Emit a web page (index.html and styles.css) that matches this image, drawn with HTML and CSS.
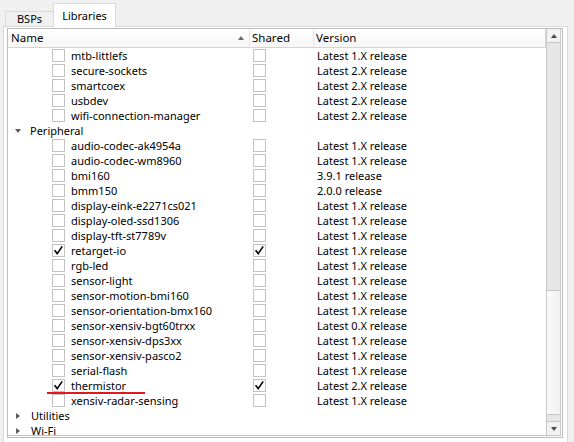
FILE: index.html
```html
<!DOCTYPE html>
<html>
<head>
<meta charset="utf-8">
<link rel="stylesheet" href="styles.css">
</head>
<body>
<div class="tabs">
  <div class="tab bsps">BSPs</div>
  <div class="tab active">Libraries</div>
</div>
<div class="pane">
  <div class="tree">
    <div class="main">
      <div class="header">
        <div class="hcell hname">Name<span class="sort"></span></div>
        <div class="hcell hshared">Shared</div>
        <div class="hcell hver">Version</div>
      </div>
      <div class="rows">
        <div class="row"><div class="c-name"><span class="cb"></span>mtb-littlefs</div><div class="c-shared"><span class="cb"></span></div><div class="c-ver">Latest 1.X release</div></div>
        <div class="row"><div class="c-name"><span class="cb"></span>secure-sockets</div><div class="c-shared"><span class="cb"></span></div><div class="c-ver">Latest 2.X release</div></div>
        <div class="row"><div class="c-name"><span class="cb"></span>smartcoex</div><div class="c-shared"><span class="cb"></span></div><div class="c-ver">Latest 2.X release</div></div>
        <div class="row"><div class="c-name"><span class="cb"></span>usbdev</div><div class="c-shared"><span class="cb"></span></div><div class="c-ver">Latest 2.X release</div></div>
        <div class="row"><div class="c-name"><span class="cb"></span>wifi-connection-manager</div><div class="c-shared"><span class="cb"></span></div><div class="c-ver">Latest 2.X release</div></div>
        <div class="row cat"><div class="c-cat"><span class="tri-down"></span>Peripheral</div></div>
        <div class="row"><div class="c-name"><span class="cb"></span>audio-codec-ak4954a</div><div class="c-shared"><span class="cb"></span></div><div class="c-ver">Latest 1.X release</div></div>
        <div class="row"><div class="c-name"><span class="cb"></span>audio-codec-wm8960</div><div class="c-shared"><span class="cb"></span></div><div class="c-ver">Latest 1.X release</div></div>
        <div class="row"><div class="c-name"><span class="cb"></span>bmi160</div><div class="c-shared"><span class="cb"></span></div><div class="c-ver">3.9.1 release</div></div>
        <div class="row"><div class="c-name"><span class="cb"></span>bmm150</div><div class="c-shared"><span class="cb"></span></div><div class="c-ver">2.0.0 release</div></div>
        <div class="row"><div class="c-name"><span class="cb"></span>display-eink-e2271cs021</div><div class="c-shared"><span class="cb"></span></div><div class="c-ver">Latest 1.X release</div></div>
        <div class="row"><div class="c-name"><span class="cb"></span>display-oled-ssd1306</div><div class="c-shared"><span class="cb"></span></div><div class="c-ver">Latest 1.X release</div></div>
        <div class="row"><div class="c-name"><span class="cb"></span>display-tft-st7789v</div><div class="c-shared"><span class="cb"></span></div><div class="c-ver">Latest 1.X release</div></div>
        <div class="row"><div class="c-name"><span class="cb"><svg viewBox="0 0 11 11" width="11" height="11"><path d="M1.6 5.2 L4.2 8.6 L9.2 1.4" fill="none" stroke="#000" stroke-width="1.6"/></svg></span>retarget-io</div><div class="c-shared"><span class="cb"><svg viewBox="0 0 11 11" width="11" height="11"><path d="M1.6 5.2 L4.2 8.6 L9.2 1.4" fill="none" stroke="#000" stroke-width="1.6"/></svg></span></div><div class="c-ver">Latest 1.X release</div></div>
        <div class="row"><div class="c-name"><span class="cb"></span>rgb-led</div><div class="c-shared"><span class="cb"></span></div><div class="c-ver">Latest 1.X release</div></div>
        <div class="row"><div class="c-name"><span class="cb"></span>sensor-light</div><div class="c-shared"><span class="cb"></span></div><div class="c-ver">Latest 1.X release</div></div>
        <div class="row"><div class="c-name"><span class="cb"></span>sensor-motion-bmi160</div><div class="c-shared"><span class="cb"></span></div><div class="c-ver">Latest 1.X release</div></div>
        <div class="row"><div class="c-name"><span class="cb"></span>sensor-orientation-bmx160</div><div class="c-shared"><span class="cb"></span></div><div class="c-ver">Latest 1.X release</div></div>
        <div class="row"><div class="c-name"><span class="cb"></span>sensor-xensiv-bgt60trxx</div><div class="c-shared"><span class="cb"></span></div><div class="c-ver">Latest 0.X release</div></div>
        <div class="row"><div class="c-name"><span class="cb"></span>sensor-xensiv-dps3xx</div><div class="c-shared"><span class="cb"></span></div><div class="c-ver">Latest 1.X release</div></div>
        <div class="row"><div class="c-name"><span class="cb"></span>sensor-xensiv-pasco2</div><div class="c-shared"><span class="cb"></span></div><div class="c-ver">Latest 1.X release</div></div>
        <div class="row"><div class="c-name"><span class="cb"></span>serial-flash</div><div class="c-shared"><span class="cb"></span></div><div class="c-ver">Latest 1.X release</div></div>
        <div class="row marked"><div class="c-name"><span class="cb"><svg viewBox="0 0 11 11" width="11" height="11"><path d="M1.6 5.2 L4.2 8.6 L9.2 1.4" fill="none" stroke="#000" stroke-width="1.6"/></svg></span>thermistor</div><div class="c-shared"><span class="cb"><svg viewBox="0 0 11 11" width="11" height="11"><path d="M1.6 5.2 L4.2 8.6 L9.2 1.4" fill="none" stroke="#000" stroke-width="1.6"/></svg></span></div><div class="c-ver">Latest 2.X release</div></div>
        <div class="row"><div class="c-name"><span class="cb"></span>xensiv-radar-sensing</div><div class="c-shared"><span class="cb"></span></div><div class="c-ver">Latest 1.X release</div></div>
        <div class="row cat"><div class="c-cat"><span class="tri-right"></span>Utilities</div></div>
        <div class="row cat"><div class="c-cat"><span class="tri-right"></span>Wi-Fi</div></div>
      </div>
    </div>
    <div class="vscroll">
      <div class="sbtn up"><span class="arr-up"></span></div>
      <div class="track"><div class="thumb"></div></div>
      <div class="sbtn down"><span class="arr-down"></span></div>
    </div>
  </div>
</div>
</body>
</html>
```

FILE: styles.css
```css
html, body {
  margin: 0;
  padding: 0;
}
body {
  width: 574px;
  height: 442px;
  overflow: hidden;
  background: #f0f0f0;
  font-family: "Segoe UI", "Noto Sans", sans-serif;
  font-size: 11px;
  color: #000;
}
.tabs {
  display: flex;
  align-items: flex-end;
  height: 26px;
  padding-left: 5px;
  box-sizing: border-box;
  position: relative;
  z-index: 1;
}
.tab {
  box-sizing: border-box;
  border: 1px solid #d9d9d9;
  border-bottom: none;
  background: #f0f0f0;
  text-align: center;
}
.tab.bsps {
  width: 48px;
  height: 15px;
  border-right: none;
  line-height: 13px;
}
.tab.active {
  width: 63px;
  height: 24px;
  margin-bottom: -1px;
  background: #fff;
  line-height: 16px;
  padding-top: 4px;
}
.pane {
  box-sizing: border-box;
  margin-left: 3px;
  width: 565px;
  height: 416px;
  border: 1px solid #d9d9d9;
  border-bottom: none;
  background: #fff;
  padding: 1px 4px 0 3px;
}
.tree {
  box-sizing: border-box;
  width: 556px;
  height: 410px;
  border: 1px solid #bcbcbc;
  padding: 0 1px 1px 0;
  display: flex;
  background: #fff;
}
.main {
  width: 538px;
  height: 407px;
  box-sizing: border-box;
  border-bottom: 1px solid #c4c4c4;
  overflow: hidden;
  display: flex;
  flex-direction: column;
}
.header {
  display: grid;
  grid-template-columns: 242px 64px 1fr;
  height: 19px;
  box-sizing: border-box;
  border-bottom: 1px solid #d5d5d5;
  flex: none;
  background: linear-gradient(#ffffff, #f7f7f7);
}
.hcell {
  box-sizing: border-box;
  border-right: 1px solid #e5e5e5;
  line-height: 18px;
  padding-left: 3px;
  position: relative;
  font-size: 11.5px;
}
.hcell.hshared { padding-left: 2px; }
.hcell.hver { border-right: 1px solid #d5d5d5; padding-left: 2px; }
.sort {
  position: absolute;
  left: 230px;
  top: 7px;
  width: 0;
  height: 0;
  border-left: 3.5px solid transparent;
  border-right: 3.5px solid transparent;
  border-bottom: 4px solid #6a6a6a;
}
.rows {
  display: flex;
  flex-direction: column;
}
.row {
  display: grid;
  grid-template-columns: 242px 64px 1fr;
  height: 15px;
  flex: none;
  line-height: 15px;
  white-space: nowrap;
}
.row.cat {
  grid-template-columns: 1fr;
}
.row.marked {
  position: relative;
}
.row.marked::after {
  content: "";
  position: absolute;
  left: 39px;
  top: 14px;
  width: 98px;
  height: 2px;
  background: #e4161e;
}
.c-name {
  display: flex;
  align-items: center;
  padding-left: 44px;
}
.c-shared {
  display: flex;
  align-items: center;
  padding-left: 3px;
}
.c-ver {
  padding-left: 3px;
}
.c-cat {
  display: flex;
  align-items: center;
  padding-left: 7px;
}
.cb {
  box-sizing: border-box;
  width: 13px;
  height: 13px;
  border: 1px solid #c2c2c2;
  background: #fff;
  margin-right: 6px;
  flex: none;
  display: flex;
  align-items: center;
  justify-content: center;
}
.cb svg { display: block; }
.tri-down {
  width: 0;
  height: 0;
  border-left: 3.5px solid transparent;
  border-right: 3.5px solid transparent;
  border-top: 4px solid #5c5c5c;
  margin-right: 9px;
}
.tri-right {
  width: 0;
  height: 0;
  border-top: 3.5px solid transparent;
  border-bottom: 3.5px solid transparent;
  border-left: 4px solid #5c5c5c;
  margin-left: 1px;
  margin-right: 11px;
}
.vscroll {
  box-sizing: border-box;
  width: 15px;
  height: 407px;
  border-left: 1px solid #c8c8c8;
  border-right: 1px solid #c8c8c8;
  border-bottom: 1px solid #c4c4c4;
  display: flex;
  flex-direction: column;
  background: #e6e6e6;
}
.sbtn {
  height: 14px;
  flex: none;
  background: #f2f2f2;
  display: flex;
  align-items: center;
  justify-content: center;
  box-sizing: border-box;
}
.sbtn.up { border-bottom: 1px solid #c8c8c8; }
.sbtn.down { border-top: 1px solid #c8c8c8; height: 14px; }
.arr-up {
  width: 0; height: 0;
  border-left: 3.5px solid transparent;
  border-right: 3.5px solid transparent;
  border-bottom: 4px solid #4a4a4a;
}
.arr-down {
  width: 0; height: 0;
  border-left: 3.5px solid transparent;
  border-right: 3.5px solid transparent;
  border-top: 4px solid #4a4a4a;
}
.track {
  flex: 1;
  display: flex;
  flex-direction: column;
  justify-content: flex-end;
  padding-bottom: 6px;
}
.thumb {
  height: 125px;
  box-sizing: border-box;
  border-bottom: 1px solid #c8c8c8;
  border-top: 1px solid #c8c8c8;
  background: linear-gradient(to right, #fafafa, #f0f0f0);
}
```
